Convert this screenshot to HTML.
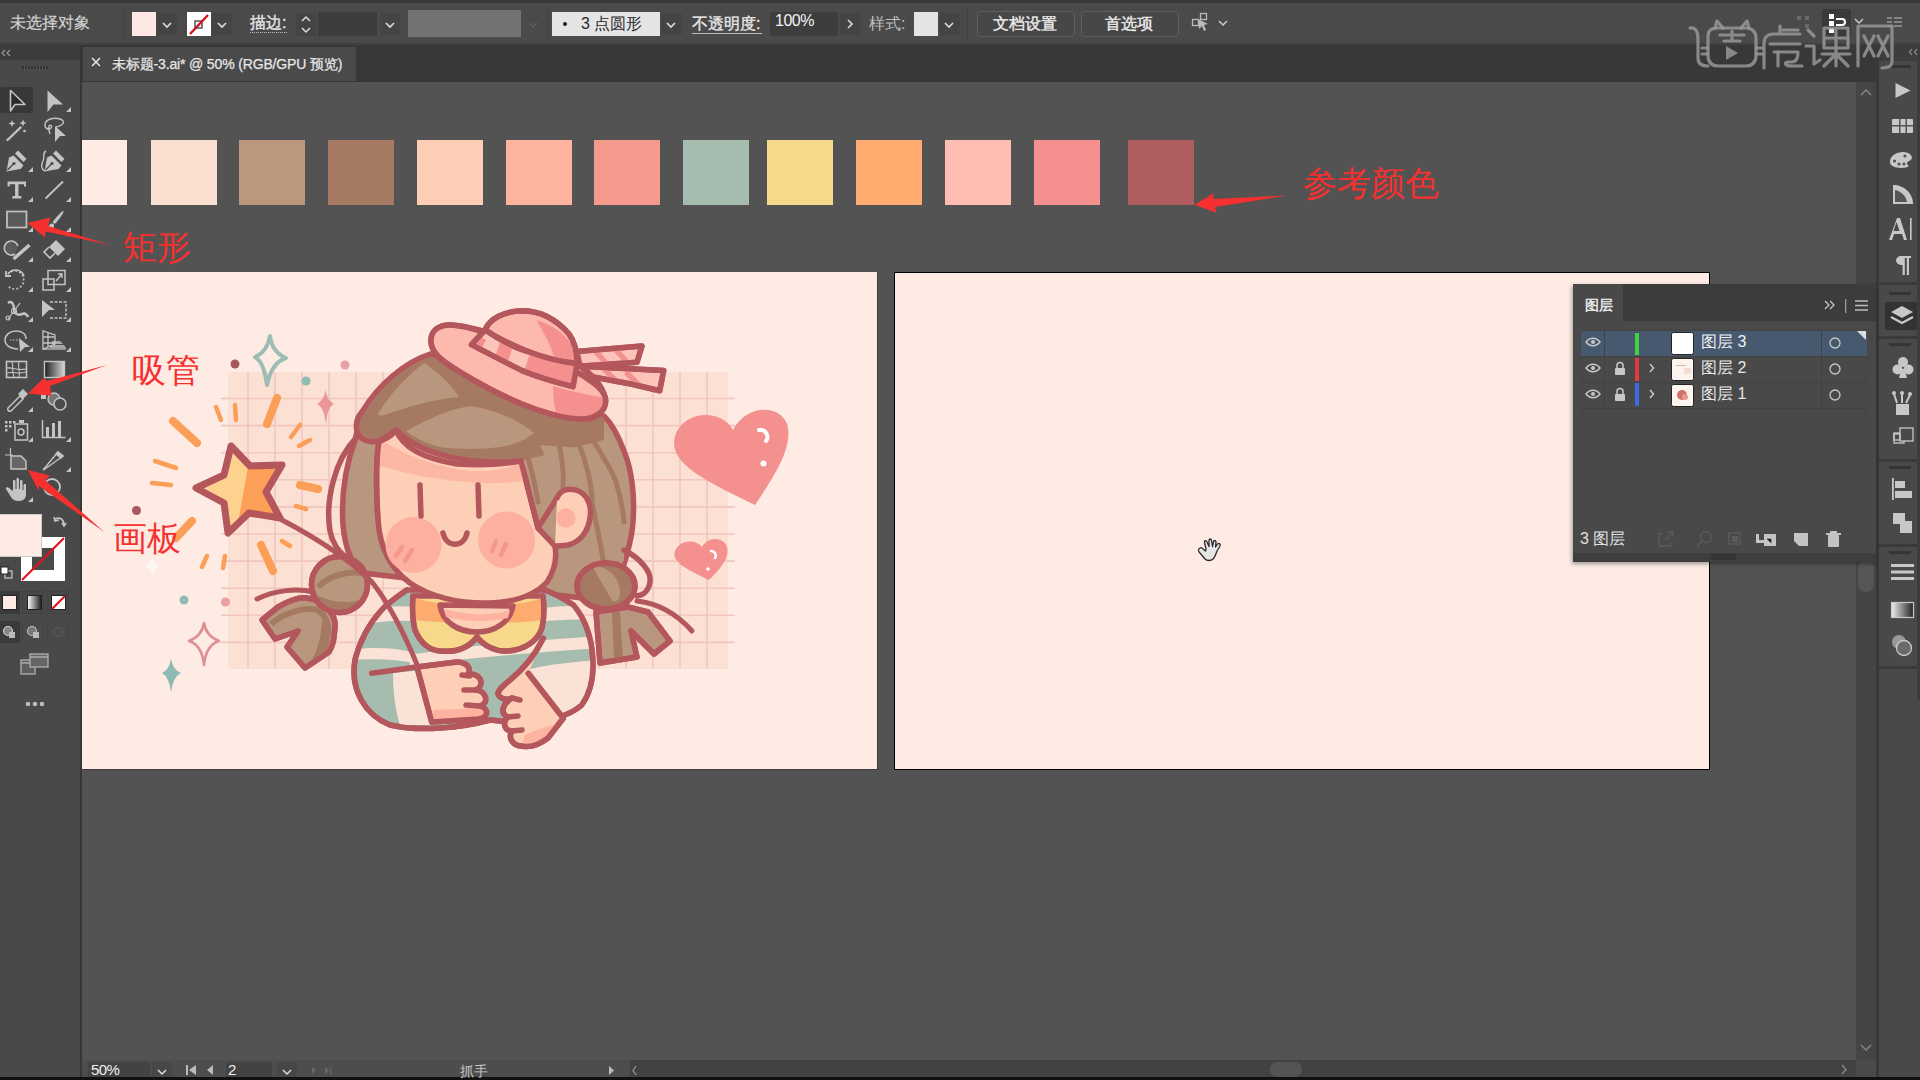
<!DOCTYPE html>
<html><head><meta charset="utf-8">
<style>
*{margin:0;padding:0;box-sizing:border-box}
html,body{width:1920px;height:1080px;overflow:hidden;background:#535353;font-family:"Liberation Sans",sans-serif;color:#ddd}
.a{position:absolute}
.t{position:absolute;white-space:nowrap;line-height:1}
</style></head><body>
<!-- top frame -->
<div class="a" style="left:0;top:0;width:1920px;height:3px;background:#393939"></div>
<!-- control bar -->
<div class="a" id="ctl" style="left:0;top:3px;width:1920px;height:42px;background:#4a4a4a"></div>
<!-- tab bar -->
<div class="a" style="left:0;top:45px;width:1920px;height:37px;background:#383838"></div>
<!-- canvas -->
<div class="a" style="left:82px;top:82px;width:1774px;height:978px;background:#535353"></div>
<!-- left toolbar -->
<div class="a" style="left:0;top:45px;width:80px;height:1032px;background:#494949"></div>
<div class="a" style="left:0;top:45px;width:80px;height:15px;background:#3c3c3c"></div>
<div class="a" style="left:80px;top:45px;width:2px;height:1032px;background:#363636"></div>
<!-- right scrollbar & dock -->
<div class="a" style="left:1856px;top:82px;width:20px;height:978px;background:#454545"></div>
<div class="a" style="left:1876px;top:45px;width:3px;height:1035px;background:#383838"></div>
<div class="a" style="left:1879px;top:45px;width:41px;height:1035px;background:#494949"></div>
<!-- status bar -->
<div class="a" style="left:82px;top:1060px;width:1774px;height:17px;background:#4a4a4a"></div>
<div class="a" style="left:0;top:1077px;width:1920px;height:3px;background:#111"></div>


<!-- CONTROL BAR CONTENT -->
<div class="a" style="left:0;top:43px;width:1920px;height:2px;background:#404040"></div>
<div class="t" style="left:10px;top:15px;font-size:16px;color:#d2d2d2;-webkit-text-stroke:0.2px #d2d2d2">未选择对象</div>
<div class="a" style="left:123px;top:8px;width:1px;height:32px;background:#424242"></div>
<div class="a" style="left:132px;top:12px;width:24px;height:24px;background:#fde9e3"></div>
<div class="a" style="left:157px;top:13px;width:20px;height:22px;background:#444;border-radius:2px"></div>
<svg class="a" style="left:157px;top:13px" width="20" height="22"><path d="M6 10l4 4 4-4" fill="none" stroke="#ddd" stroke-width="1.6"/></svg>
<div class="a" style="left:187px;top:12px;width:24px;height:24px;background:#fff"></div>
<svg class="a" style="left:187px;top:12px" width="24" height="24"><rect x="8" y="9" width="7" height="7" fill="none" stroke="#555" stroke-width="1.5"/><path d="M3 22L21 3" stroke="#d0121a" stroke-width="2.4"/></svg>
<div class="a" style="left:212px;top:13px;width:20px;height:22px;background:#444;border-radius:2px"></div>
<svg class="a" style="left:212px;top:13px" width="20" height="22"><path d="M6 10l4 4 4-4" fill="none" stroke="#ddd" stroke-width="1.6"/></svg>
<div class="t" style="-webkit-text-stroke:0.35px #e8e8e8;left:250px;top:15px;font-size:16px;color:#e0e0e0">描边:</div>
<div class="a" style="left:250px;top:32px;width:37px;height:0;border-top:1px dotted #bbb"></div>
<div class="a" style="left:296px;top:13px;width:20px;height:23px;background:#444;border-radius:2px"></div>
<svg class="a" style="left:296px;top:13px" width="20" height="23"><path d="M6 8l4-4 4 4M6 15l4 4 4-4" fill="none" stroke="#ddd" stroke-width="1.5"/></svg>
<div class="a" style="left:318px;top:12px;width:59px;height:24px;background:#3d3d3d"></div>
<div class="a" style="left:380px;top:13px;width:20px;height:22px;background:#444;border-radius:2px"></div>
<svg class="a" style="left:380px;top:13px" width="20" height="22"><path d="M6 10l4 4 4-4" fill="none" stroke="#ddd" stroke-width="1.6"/></svg>
<div class="a" style="left:408px;top:10px;width:113px;height:27px;background:#737373"></div>
<svg class="a" style="left:523px;top:13px" width="20" height="22"><path d="M6 10l4 4 4-4" fill="none" stroke="#5e5e5e" stroke-width="1.4"/></svg>
<div class="a" style="left:547px;top:8px;width:1px;height:32px;background:#424242"></div>
<div class="a" style="left:552px;top:12px;width:108px;height:24px;background:#e4e4e4"></div>
<div class="a" style="left:563px;top:22px;width:4px;height:4px;background:#222;border-radius:50%"></div>
<div class="t" style="left:581px;top:16px;font-size:16px;color:#2a2a2a">3 点圆形</div>
<div class="a" style="left:661px;top:13px;width:21px;height:22px;background:#444;border-radius:2px"></div>
<svg class="a" style="left:661px;top:13px" width="21" height="22"><path d="M6 10l4 4 4-4" fill="none" stroke="#ddd" stroke-width="1.6"/></svg>
<div class="t" style="-webkit-text-stroke:0.35px #e8e8e8;left:692px;top:16px;font-size:16px;color:#e6e6e6">不透明度:</div>
<div class="a" style="left:692px;top:33px;width:70px;height:1px;background:#bbb"></div>
<div class="a" style="left:770px;top:12px;width:68px;height:24px;background:#3d3d3d"></div>
<div class="t" style="left:775px;top:13px;font-size:16px;color:#f2f2f2;letter-spacing:-0.5px">100%</div>
<div class="a" style="left:840px;top:13px;width:20px;height:22px;background:#444;border-radius:2px"></div>
<svg class="a" style="left:840px;top:13px" width="20" height="22"><path d="M8 7l4 4-4 4" fill="none" stroke="#ddd" stroke-width="1.6"/></svg>
<div class="t" style="left:869px;top:16px;font-size:16px;color:#bdbdbd">样式:</div>
<div class="a" style="left:914px;top:12px;width:24px;height:24px;background:#e4e4e4"></div>
<div class="a" style="left:939px;top:13px;width:21px;height:22px;background:#444;border-radius:2px"></div>
<svg class="a" style="left:939px;top:13px" width="21" height="22"><path d="M6 10l4 4 4-4" fill="none" stroke="#ddd" stroke-width="1.6"/></svg>
<div class="a" style="left:967px;top:8px;width:1px;height:32px;background:#424242"></div>
<div class="a" style="left:977px;top:11px;width:98px;height:26px;border:1px solid #5e5e5e;border-radius:4px;background:#474747"></div>
<div class="t" style="-webkit-text-stroke:0.35px #e8e8e8;left:993px;top:16px;font-size:16px;color:#f0f0f0">文档设置</div>
<div class="a" style="left:1081px;top:11px;width:98px;height:26px;border:1px solid #5e5e5e;border-radius:4px;background:#474747"></div>
<div class="t" style="-webkit-text-stroke:0.35px #e8e8e8;left:1105px;top:16px;font-size:16px;color:#f0f0f0">首选项</div>
<svg class="a" style="left:1190px;top:10px" width="45" height="26"><rect x="2.5" y="9.5" width="6" height="6" fill="none" stroke="#bbb" stroke-width="1.3"/><rect x="10.5" y="3.5" width="6" height="6" fill="none" stroke="#bbb" stroke-width="1.3"/><path d="M8 9l10 5-4 1 2 5-2 1-2-5-3 3z" fill="#bbb"/><path d="M29 11l4 4 4-4" fill="none" stroke="#ccc" stroke-width="1.5"/></svg>
<!-- top right icons -->
<svg class="a" style="left:1795px;top:12px" width="20" height="24"><g fill="#6a6a6a"><rect x="2" y="4" width="4" height="4"/><rect x="10" y="4" width="4" height="4"/><rect x="10" y="12" width="4" height="4"/></g></svg>
<div class="a" style="left:1822px;top:9px;width:29px;height:29px;background:#3a3a3a;border-radius:2px"></div>
<svg class="a" style="left:1822px;top:9px" width="29" height="29"><g fill="#fff"><rect x="7" y="5" width="5" height="5"/><rect x="7" y="12" width="5" height="5"/><rect x="7" y="19" width="5" height="5"/></g><path d="M14 10h6a3 3 0 0 1 0 6h-6" fill="none" stroke="#fff" stroke-width="2"/></svg>
<svg class="a" style="left:1852px;top:14px" width="16" height="16"><path d="M3 5l4 4 4-4" fill="none" stroke="#ccc" stroke-width="1.4"/></svg>
<svg class="a" style="left:1886px;top:16px" width="18" height="14"><g stroke="#999" stroke-width="1.3"><path d="M1 2h5M1 6h5M1 10h5M8 2h8M8 6h8M8 10h8"/></g></svg>


<!-- TAB -->
<div class="a" style="left:83px;top:47px;width:273px;height:34px;background:#4a4a4a"></div>
<svg class="a" style="left:90px;top:56px" width="12" height="12"><path d="M2 2l8 8M10 2l-8 8" stroke="#e8e8e8" stroke-width="1.5"/></svg>
<div class="t" style="left:112px;top:57px;font-size:14px;color:#e6e6e6;letter-spacing:-0.15px;-webkit-text-stroke:0.25px #e6e6e6">未标题-3.ai* @ 50% (RGB/GPU 预览)</div>
<!-- toolbar header -->
<svg class="a" style="left:0;top:45px" width="80" height="30"><path d="M5 5l-3 3 3 3M10 5l-3 3 3 3" fill="none" stroke="#999" stroke-width="1.2"/><g fill="#333"><rect x="22" y="21" width="26" height="3"/></g><g fill="#555"><rect x="24" y="21" width="1" height="3"/><rect x="27" y="21" width="1" height="3"/><rect x="30" y="21" width="1" height="3"/><rect x="33" y="21" width="1" height="3"/><rect x="36" y="21" width="1" height="3"/><rect x="39" y="21" width="1" height="3"/><rect x="42" y="21" width="1" height="3"/><rect x="45" y="21" width="1" height="3"/></g></svg>
<!-- TOOLS -->
<svg class="a" style="left:0;top:0" width="80" height="720">
<defs><linearGradient id="gg" x1="0" x2="1"><stop offset="0" stop-color="#1e1e1e"/><stop offset="1" stop-color="#d8d8d8"/></linearGradient>
<linearGradient id="gg2" x1="0" x2="1"><stop offset="0" stop-color="#eee"/><stop offset="1" stop-color="#222"/></linearGradient></defs>
<rect x="0" y="87" width="33" height="26" rx="3" fill="#383838"/>
<g fill="#c4c4c4" stroke="none">
<!-- small triangles -->
<path d="M66 112h5v-5z"/>
<path d="M28 172h5v-5z"/><path d="M66 172h5v-5z"/>
<path d="M28 202h5v-5z"/><path d="M66 202h5v-5z"/>
<path d="M28 232h5v-5z"/><path d="M66 232h5v-5z"/>
<path d="M28 262h5v-5z"/><path d="M66 262h5v-5z"/>
<path d="M28 292h5v-5z"/><path d="M66 292h5v-5z"/>
<path d="M28 322h5v-5z"/><path d="M66 322h5v-5z"/>
<path d="M28 352h5v-5z"/><path d="M66 352h5v-5z"/>
<path d="M28 412h5v-5z"/>
<path d="M28 442h5v-5z"/><path d="M66 442h5v-5z"/>
<path d="M66 472h5v-5z"/>
<path d="M28 502h5v-5z"/>
<!-- direct selection -->
<path d="M47.5 90.5L63 104.5h-9.5l-6 7.5z"/>
<!-- magic wand stars -->
<path d="M12 120l1 2.5 2.5 1-2.5 1-1 2.5-1-2.5-2.5-1 2.5-1z"/>
<path d="M23 119.5l1 2.5 2.5 1-2.5 1-1 2.5-1-2.5-2.5-1 2.5-1z"/>
<circle cx="24.5" cy="131" r="1.3"/>
<!-- lasso arrow -->
<path d="M55 126l11 10h-6l-5 6z"/>
<!-- pen -->
<path d="M18 150.5l8.5 8.5-3 3-8.5-8.5z"/><path d="M13.5 155.5l10 10-3 3.5-14 2.5 2.5-14z"/><path d="M7.5 170l6-6" stroke="#494949" stroke-width="1.2"/><circle cx="14" cy="163.5" r="1.6" fill="#494949"/>
<!-- curvature pen -->
<path d="M56 150.5l8.5 8.5-3 3-8.5-8.5z"/><path d="M51.5 155.5l10 10-3 3.5-14 2.5 2.5-14z"/><path d="M45.5 170l6-6" stroke="#494949" stroke-width="1.2"/><circle cx="52" cy="163.5" r="1.6" fill="#494949"/>
<!-- Type T -->
<path d="M7.5 181.5h18.5v5h-2v-2.3h-5.5v11.8h2.8v2.5h-9v-2.5h2.8v-11.8h-5.5v2.3h-2z"/>
<!-- eraser -->
<path d="M56 240l9 9-7 7-9-9z"/>
<!-- direct free transform arrow -->
<path d="M42 300l13 10h-6l-7 7z"/>
<!-- perspective bars -->
<path d="M52 341h8l3 3h-11zM50 345h14l2 3h-16z" fill="#a8a8a8"/>
<!-- blend square -->
<rect x="41" y="393" width="5" height="6"/>
<!-- symbol sprayer dots -->
<rect x="5" y="421" width="2.5" height="2.5"/><rect x="9" y="421" width="2.5" height="2.5"/><rect x="13" y="421" width="2.5" height="2.5"/>
<rect x="5" y="425" width="2.5" height="2.5"/><rect x="9" y="425" width="2.5" height="2.5"/>
<rect x="5" y="429" width="2.5" height="2.5"/>
<rect x="19" y="420" width="5" height="3"/>
<!-- column graph bars -->
<rect x="46" y="427" width="3" height="10"/><rect x="52" y="423" width="3" height="14"/><rect x="58" y="421" width="3" height="16"/>
<!-- hand -->
<path d="M9 488c-1.5-1.5-3.5-1-3 1l5 8c2 3 4 4 8 4 5 0 7-3 7-7v-9c0-1.5-2.5-1.5-2.5 0v5h-1v-9c0-1.5-2.5-1.5-2.5 0v8h-1v-10c0-1.5-2.5-1.5-2.5 0v10h-1v-8c0-1.5-2.5-1.5-2.5 0v10z"/>
<!-- paintbrush --><path d="M63.5 211c1 1 -6 11 -9 13l-2-2c2-3 10-12 11-11z"/><path d="M50.5 224c2-1 4 0 3.5 2.5c-1 3-5 4.5-8.5 4c2-1 2.5-5 5-6.5z"/>
<!-- slice tip -->
<path d="M58 451l6 5-3 3-6-5z"/>
</g>
<g fill="none" stroke="#c4c4c4" stroke-width="1.6">
<!-- selection outline -->
<path d="M10.5 90.5V111l4.5-6.5h10z" fill="#2a2a2a" stroke-linejoin="round"/>
<!-- wand stick -->
<path d="M7.5 140l13-12.5" stroke-width="2.4" stroke-linecap="round"/>
<!-- lasso loop -->
<path d="M56 127c8-2 10-6 4-8c-6-2-15 0-15 6c0 4 4 5 6 3c2-2-1-4-2-2c-1 2 0 5 1 8" stroke-width="1.4"/>
<!-- curvature curl -->
<path d="M46 151c-4 2 -1 6 -3 10s-2 8 2 10" stroke-width="1.4"/>
<!-- line -->
<path d="M45.5 198.5L63 181.5" stroke-width="1.8"/>
<!-- rect -->
<rect x="7" y="211.5" width="19.5" height="16" fill="#5a5a5a" stroke="#bdbdbd" stroke-width="1.8"/>
<!-- shaper -->
<path d="M15 254a7 7 0 1 1 3-8" fill="#5a5a5a" stroke-width="1.6"/>
<path d="M13.5 259l16-14" stroke-width="3.5"/>
<!-- eraser bottom -->
<path d="M49 247l-5 5 6 6 5-5" stroke-width="1.6"/>
<!-- rotate -->
<path d="M8 274a9 9 0 1 1 0 12" stroke-dasharray="2 2"/>
<path d="M8 274a9 9 0 0 1 16 2" />
<path d="M6 271v5h5" stroke-width="1.8"/>
<!-- scale -->
<rect x="48" y="270.5" width="17" height="14" stroke-width="1.5"/>
<rect x="43" y="279" width="11" height="11" stroke-width="1.5"/>
<path d="M56 281l6-7M58 274h4v4" stroke-width="1.4"/>
<!-- puppet -->
<path d="M8 303c4-3 6 2 6 6c0 4 3 7 8 5c3-1 5 0 6 3" stroke-width="2.5"/>
<path d="M20 303l-12 16" stroke-width="1.2"/><circle cx="8" cy="318" r="2" stroke-width="1.2"/><circle cx="14" cy="311" r="2.5" stroke-width="1.2"/>
<!-- free transform dashed rect -->
<path d="M50 302h16v16h-16" stroke-width="1.4" stroke-dasharray="3 1.5"/>
<!-- shape builder -->
<path d="M18 349c-8 0-13-4-13-9s5-9 11-9c6 0 10 3 10 8" stroke-width="1.5"/>
<path d="M10 340h8" stroke-dasharray="1.5 1.5" stroke-width="1.2"/>
<path d="M19 338l11 9h-5l-5 5z" fill="#c4c4c4" stroke="none"/>
<!-- perspective grid -->
<path d="M43 331v18l12-5v-9z M43 337h12 M43 343h12 M48 332v15" stroke-width="1.3"/>
<path d="M43 349h23" stroke-width="1.3"/>
<!-- mesh -->
<rect x="6.5" y="361.5" width="20" height="16" stroke-width="1.6"/>
<path d="M7 368c6-1 8 3 19 1 M7 373c7-2 10 2 19-1 M12 362c2 5-1 9 2 15 M19 362c-2 6 2 8 0 15" stroke-width="1.1"/>
<!-- gradient -->
<rect x="44.5" y="361.5" width="20" height="16" fill="url(#gg)" stroke="#c4c4c4" stroke-width="1.4"/>
<!-- eyedropper -->
<path d="M8 408l12-12 3 3-12 12c-2 1-4-1-3-3z" stroke-width="1.5"/>
<path d="M18 394l5-5 5 5-5 5z" fill="#c4c4c4" stroke="none"/>
<!-- blend circles -->
<circle cx="54" cy="399" r="6" fill="#777" stroke-width="1.4"/>
<circle cx="60" cy="404" r="6" fill="#4a4a4a" stroke-width="1.5"/>
<!-- symbol sprayer bottle -->
<rect x="15" y="424" width="12.5" height="16" stroke-width="1.5"/><circle cx="21" cy="432" r="3" stroke-width="1.5"/>
<!-- column graph axis -->
<path d="M42.5 420v17.5h23" stroke-width="1.5"/>
<!-- artboard -->
<path d="M10.5 448v8M5 455h8" stroke-width="1.2"/>
<path d="M11 456h10l5 5v8h-15z" fill="#666" stroke-width="1.5"/>
<!-- slice -->
<path d="M43 470l15-18l5 4l-18 13z" stroke-width="1.4"/>
<!-- zoom -->
<circle cx="52" cy="487" r="8" stroke-width="1.8"/>
</g>
</svg>
<!-- FILL/STROKE WIDGET -->
<div class="a" style="left:21px;top:537px;width:44px;height:44px;background:#fff"></div>
<div class="a" style="left:32px;top:548px;width:22px;height:22px;background:#4a4a4a"></div>
<svg class="a" style="left:21px;top:537px" width="44" height="44"><path d="M1 43L43 1" stroke="#e0121a" stroke-width="2.2"/></svg>
<div class="a" style="left:0;top:514px;width:42px;height:43px;background:#fdebe4;border:1px solid #ccc;border-left:none"></div>
<svg class="a" style="left:52px;top:514px" width="16" height="16"><path d="M3 5c4-2 8-1 9 5" fill="none" stroke="#c4c4c4" stroke-width="1.8"/><path d="M2 3l1 4 4-1M10 9l2 3 2-3" fill="none" stroke="#c4c4c4" stroke-width="1.6"/></svg>
<svg class="a" style="left:0;top:566px" width="14" height="14"><rect x="5" y="5" width="7" height="7" fill="none" stroke="#ccc" stroke-width="1.2"/><rect x="1" y="1" width="7" height="7" fill="#fff" stroke="#222" stroke-width="1"/></svg>
<div class="a" style="left:0;top:591px;width:20px;height:23px;background:#3a3a3a"></div>
<div class="a" style="left:22px;top:591px;width:22px;height:23px;background:#474747;border:1px solid #424242"></div>
<div class="a" style="left:47px;top:591px;width:22px;height:23px;background:#474747;border:1px solid #424242"></div>
<div class="a" style="left:2px;top:595px;width:15px;height:15px;background:#fdebe4;border:1px solid #222"></div>
<div class="a" style="left:27px;top:595px;width:15px;height:15px;background:linear-gradient(90deg,#f5f5f5,#222);border:1px solid #222"></div>
<div class="a" style="left:51px;top:595px;width:15px;height:15px;background:#fff;border:1px solid #222"></div>
<svg class="a" style="left:51px;top:595px" width="15" height="15"><path d="M1 14L14 1" stroke="#e0121a" stroke-width="2.2"/></svg>
<div class="a" style="left:0;top:621px;width:20px;height:22px;background:#3a3a3a"></div>
<div class="a" style="left:22px;top:621px;width:22px;height:22px;border:1px solid #444"></div>
<div class="a" style="left:47px;top:621px;width:22px;height:22px;border:1px solid #444"></div>
<svg class="a" style="left:0;top:621px" width="70" height="22"><circle cx="8" cy="10" r="4.5" fill="#888" stroke="#ccc" stroke-width="1.2"/><rect x="9" y="11" width="6" height="6" fill="#bbb"/><circle cx="32" cy="10" r="4.5" fill="#777" stroke="#bbb" stroke-width="1.2"/><rect x="33" y="11" width="6" height="6" fill="#bbb"/><circle cx="58" cy="11" r="4.5" fill="none" stroke="#5e5e5e" stroke-width="1.2"/></svg>
<svg class="a" style="left:18px;top:651px" width="34" height="26"><rect x="3" y="9" width="14" height="14" fill="#5e5e5e" stroke="#aaa" stroke-width="1.4"/><rect x="12" y="3" width="18" height="13" fill="#666" stroke="#aaa" stroke-width="1.4"/><path d="M12 6h18M3 12h9" stroke="#aaa" stroke-width="1.4"/></svg>
<svg class="a" style="left:24px;top:699px" width="24" height="10"><circle cx="4" cy="5" r="2.3" fill="#bbb"/><circle cx="11" cy="5" r="2.3" fill="#bbb"/><circle cx="18" cy="5" r="2.3" fill="#bbb"/></svg>


<!-- SWATCHES -->
<div class="a" style="left:82px;top:140px;width:45px;height:65px;background:#fdebe4"></div>
<div class="a" style="left:151px;top:140px;width:66px;height:65px;background:#f9dfd0"></div>
<div class="a" style="left:239px;top:140px;width:66px;height:65px;background:#bb977e"></div>
<div class="a" style="left:328px;top:140px;width:66px;height:65px;background:#a67a62"></div>
<div class="a" style="left:417px;top:140px;width:66px;height:65px;background:#fecdb6"></div>
<div class="a" style="left:506px;top:140px;width:66px;height:65px;background:#feb39e"></div>
<div class="a" style="left:594px;top:140px;width:66px;height:65px;background:#f39a8c"></div>
<div class="a" style="left:683px;top:140px;width:66px;height:65px;background:#a5bcae"></div>
<div class="a" style="left:767px;top:140px;width:66px;height:65px;background:#f8d98c"></div>
<div class="a" style="left:856px;top:140px;width:66px;height:65px;background:#fdab6f"></div>
<div class="a" style="left:945px;top:140px;width:66px;height:65px;background:#febdb3"></div>
<div class="a" style="left:1034px;top:140px;width:66px;height:65px;background:#f4918f"></div>
<div class="a" style="left:1128px;top:140px;width:66px;height:65px;background:#b05d60"></div>

<!-- artboards -->
<div class="a" style="left:82px;top:272px;width:795px;height:497px;background:#fdebe4;box-shadow:1px 1px 0 #3d3d3d"></div>
<div class="a" style="left:894px;top:272px;width:816px;height:498px;background:#fdebe4;border:1px solid #000"></div>



<!-- ILLUS --><svg class="a" style="left:82px;top:272px" width="795" height="497" viewBox="82 272 795 497">
<defs>
<clipPath id="ab1"><rect x="82" y="272" width="795" height="497"/></clipPath>
<clipPath id="bodyc"><path d="M406.7 590C395 598 388 603 381.7 610C368 625 360 640 355 660C350 690 365 715 390 725C420 732 460 728 490 720C530 725 565 720 581.7 705C600 680 595 630 573.3 605C563 598 555 594 545 590Z"/></clipPath>
</defs>
<g clip-path="url(#ab1)">
<!-- grid -->
<rect x="228" y="372" width="500" height="297" fill="#fbe0d3"/>
<g stroke="#f1c6c0" stroke-width="1.6">
<path d="M221 398.5H735M221 425.6H735M221 452.7H735M221 479.8H735M221 506.9H735M221 534H735M221 561.1H735M221 588.2H735M221 615.3H735M221 642.4H735"/>
<path d="M248 372V669M275 372V669M302 372V669M329 372V669M356 372V669M383 372V669M410 372V669M437 372V669M464 372V669M491 372V669M518 372V669M545 372V669M572 372V669M599 372V669M626 372V669M653 372V669M680 372V669M707 372V669"/>
</g>
<!-- dots -->
<circle cx="235" cy="364" r="4.5" fill="#a9585d"/>
<circle cx="345" cy="365" r="4.5" fill="#eb9fa2"/>
<circle cx="306" cy="381" r="4.5" fill="#8fbdb4"/>
<circle cx="136.5" cy="510.5" r="4.5" fill="#a9585d"/>
<circle cx="184" cy="600" r="4.5" fill="#8fbdb4"/>
<circle cx="225.5" cy="602" r="4.5" fill="#eb9fa2"/>
<!-- sparkles -->
<path d="M270 336Q272 352 286 358Q272 362 267 385Q264 362 255 357Q267 352 270 336Z" fill="none" stroke="#9dbdb4" stroke-width="4" stroke-linejoin="round"/>
<path d="M325.5 390Q327 400 334 404Q327 407 326 425Q324 407 317 404Q324 400 325.5 390Z" fill="#e9979a"/>
<path d="M204 623Q206 636 219 641Q206 645 204 665Q202 645 189 641Q202 636 204 623Z" fill="none" stroke="#df8f93" stroke-width="2.6" stroke-linejoin="round"/>
<path d="M171 659Q173 670 181 673Q173 677 171 692Q169 677 162 673Q169 670 171 659Z" fill="#8fbab3"/>
<path d="M152.6 557Q154 564 160 566Q154 568 152.6 575Q151 568 145 566Q151 564 152.6 557Z" fill="#fdf8f4"/>
<!-- rays -->
<g stroke="#fb9e57" stroke-linecap="round" fill="none">
<path d="M173 421L197 443" stroke-width="8"/>
<path d="M277 398L267 424" stroke-width="8"/>
<path d="M300 485L318 489" stroke-width="8"/>
<path d="M192 521L176 538" stroke-width="8"/>
<path d="M261 545L273 571" stroke-width="8"/>
<path d="M216 407L221 420M235 405L236 420M300 425L291 437M310 440L299 446M155 461L176 468M152 483L171 485M296 506L306 509M282 541L290 546M207 556L202 567M225 556L223 568" stroke-width="4.5"/>
</g>
<!-- hearts -->
<path d="M733 430C722 408 683 410 675 436C668 462 700 478 755 505C773 478 794 447 787 424C780 404 746 404 733 430Z" fill="#f4918f"/>
<path d="M759 430a7 7 0 0 1 7 11" fill="none" stroke="#fff" stroke-width="4" stroke-linecap="round"/>
<circle cx="763.5" cy="463.5" r="3" fill="#fff"/>
<path d="M702 547C696 539 680 539 675 551C671 562 688 570 709 580C720 569 730 558 727 547C724 537 708 536 702 547Z" fill="#f4918f"/>
<path d="M711 551a4.5 4.5 0 0 1 4 7" fill="none" stroke="#fff" stroke-width="2.5" stroke-linecap="round"/>
<circle cx="708" cy="569" r="1.8" fill="#fff"/>

<g stroke="#b3575d" stroke-width="5.5" stroke-linejoin="round" stroke-linecap="round">
<!-- hair back -->
<path d="M431 354C405 362 378 385 362 412L355 440C346 465 341 495 343 525C345 548 352 564 362 573L600 600C615 590 625 570 632 532C636 500 632 470 624 451C618 435 610 422 604 416Z" fill="#b9977e"/>
<path d="M355.6 438.5C335 460 325 500 330 531C333 545 340 553 346 557" fill="none"/>
</g>
<!-- hair top dark region -->
<path d="M431 357C405 365 380 388 364 414L360 430L396 430C410 450 470 466 521 461L604 440L604 418C560 400 480 370 431 357Z" fill="#a67a62"/>
<path d="M376 418C385 400 402 380 424 363C440 373 452 386 459 397C440 398 412 405 376 418Z" fill="#b9977e"/>
<path d="M357 422C355 436 365 443 379 442C388 441 394 436 397 430L390 416L362 414Z" fill="#a67a62"/>
<path d="M406 431C430 418 450 409 470 406C500 411 520 421 534 433C522 442 510 446 500 447C480 450 452 449 440 447C425 443 413 437 406 431Z" fill="#b9977e"/>
<!-- right hair strands -->
<path d="M540 445C552 470 560 500 562 515L580 520C590 540 600 570 608 590L624 560C626 530 622 480 610 450Z" fill="#b9977e"/>
<g stroke="#a67a62" stroke-width="5" fill="none" stroke-linecap="round">
<path d="M557 437C562 455 564 475 563 488"/>
<path d="M577 439C586 460 592 485 592 502C596 525 603 550 606 583"/>
<path d="M591 437C602 455 612 470 616 482C620 495 623 510 624 522"/>
<path d="M526 451C532 470 536 490 538 502"/>
</g>
<g stroke="#b3575d" stroke-width="5.5" stroke-linejoin="round" stroke-linecap="round">
<!-- left braid tail -->
<path d="M262 620L278 607C290 600 300 597 307 598C318 600 325 603 327 607C333 615 336 620 335 627C334 640 333 646 329 652L305 668L287 647L298 631L275 639Z" fill="#b9977e"/>
</g>
<path d="M271 624C285 612 305 607 318 610C326 616 329 625 328 635" fill="none" stroke="#a67a62" stroke-width="6"/>
<path d="M322 615C330 625 333 640 326 652L312 660C320 645 322 630 322 615Z" fill="#a67a62"/>
<g stroke="#b3575d" stroke-width="5.5" stroke-linejoin="round" stroke-linecap="round" fill="none">
<path d="M262 620L278 607C290 600 300 597 307 598C318 600 325 603 327 607C333 615 336 620 335 627C334 640 333 646 329 652L305 668L287 647L298 631L275 639Z"/>
</g>
<g stroke="#b3575d" stroke-width="5.5" stroke-linejoin="round" stroke-linecap="round">
<circle cx="339.5" cy="584.5" r="28" fill="#b9977e"/>
</g>
<path d="M318 587C330 575 350 570 365 574" fill="none" stroke="#a67a62" stroke-width="6"/>
<path d="M316 595C330 602 350 605 366 598C362 606 350 612 338 612C328 611 320 604 316 595Z" fill="#a67a62"/>
<g stroke="#b3575d" stroke-width="5.5" stroke-linejoin="round" stroke-linecap="round" fill="none">
<circle cx="339.5" cy="584.5" r="28"/>
</g>
<g stroke="#b3575d" stroke-width="5.5" stroke-linejoin="round" stroke-linecap="round">
<!-- right braid tail -->
<path d="M596 612L600 663L637 657L631 631L654 654L670 641L648 612L628 607Z" fill="#b9977e"/>
</g>
<path d="M612 612L620 612L623 660L614 661Z" fill="#a67a62"/>
<g stroke="#b3575d" stroke-width="5.5" stroke-linejoin="round" stroke-linecap="round" fill="none">
<path d="M596 612L600 663L637 657L631 631L654 654L670 641L648 612L628 607Z"/>
<path d="M624 550C640 558 652 572 650 582C649 590 644 595 637 596"/>
</g>
<g stroke="#b3575d" stroke-width="5.5" stroke-linejoin="round" stroke-linecap="round">
<ellipse cx="606" cy="586" rx="29" ry="23" fill="#a67a62"/>
</g>
<path d="M592 566C605 565 618 575 620 590C621 600 615 604 612 600C606 590 600 580 592 566Z" fill="#b9977e"/>
<g stroke="#b3575d" stroke-width="5.5" stroke-linejoin="round" stroke-linecap="round" fill="none">
<ellipse cx="606" cy="586" rx="29" ry="23"/>
</g>
<g stroke="#b3575d" stroke-width="5.5" stroke-linejoin="round" stroke-linecap="round">
<!-- body -->
<path d="M406.7 590C395 598 388 603 381.7 610C368 625 360 640 355 660C350 690 365 715 390 725C420 732 460 728 490 720C530 725 565 720 581.7 705C600 680 595 630 573.3 605C563 598 555 594 545 590Z" fill="#a5bcae"/>
</g>
<g clip-path="url(#bodyc)" fill="#fae3d6">
<path d="M370 609C395 605 415 606 430 609L430 623C410 620 390 620 368 624Z"/>
<path d="M535 609C555 606 575 605 595 606L595 620C575 619 555 620 535 622Z"/>
<path d="M350 650C380 645 410 650 420 655L420 664C400 660 380 658 350 660Z"/>
<path d="M410 655C470 645 540 640 600 636L600 648C540 652 470 658 410 665Z"/>
<path d="M393 673L423 670L430 725L400 725C395 710 393 690 393 673Z"/>
<path d="M527 670C545 665 570 662 600 660L600 715L563 720Z"/>
</g>
<g stroke="#b3575d" stroke-width="5.5" stroke-linejoin="round" stroke-linecap="round">
<path d="M406.7 590C395 598 388 603 381.7 610C368 625 360 640 355 660C350 690 365 715 390 725C420 732 460 728 490 720C530 725 565 720 581.7 705C600 680 595 630 573.3 605C563 598 555 594 545 590" fill="none"/>
<!-- collar -->
<path d="M413 596C412 610 413 622 415 630C420 642 428 650 440 651C458 653 470 646 477 637C484 646 495 651 505 651C525 651 538 640 542 628C545 615 544 605 543 596Z" fill="#f8d98c"/>
</g>
<path d="M416 598C440 608 520 608 541 598L542 620C520 624 440 624 416 620Z" fill="#fdab6f"/>
<g stroke="#b3575d" stroke-width="5.5" stroke-linejoin="round" stroke-linecap="round">
<path d="M413 596C412 610 413 622 415 630C420 642 428 650 440 651C458 653 470 646 477 637C484 646 495 651 505 651C525 651 538 640 542 628C545 615 544 605 543 596" fill="none"/>
<path d="M440 605C442 622 458 632 477 632C495 632 510 622 513 606Z" fill="#fecfb7"/>
</g>
<path d="M444 609C470 616 490 616 510 610L508 618C490 622 466 622 446 617Z" fill="#fdb3a0"/>
<g stroke="#b3575d" stroke-width="5.5" stroke-linejoin="round" stroke-linecap="round">
<!-- face -->
<path d="M379 441C376 460 376 490 378 520C380 550 392 570 410 583C430 597 460 604 490 603C515 602 535 595 547 582C555 570 557 558 555 546L538 528L521 461C470 466 420 455 396 430Z" fill="#fecfb7"/>
</g>
<!-- face shading under bangs -->
<path d="M379 438C400 454 440 468 470 471C495 472 515 467 524 460L528 480C500 486 440 484 380 466Z" fill="#fcb8a3"/>
<!-- cheeks -->
<circle cx="413.5" cy="545" r="28" fill="#fdb0a0"/>
<circle cx="506.7" cy="540" r="28.5" fill="#fdb0a0"/>
<g stroke="#f5978c" stroke-width="4.5" stroke-linecap="round">
<path d="M402 547L396 556M412 550L405 561M496 541L492 551M506 544L501 555"/>
</g>
<g stroke="#b3575d" stroke-width="5.5" stroke-linejoin="round" stroke-linecap="round" fill="none">
<path d="M420 485L421 516M478 485L479 516"/>
<path d="M443 533C446 548 464 548 467 533"/>
<!-- bangs outline + bun -->
<path d="M362 412C356 418 354 430 360 437C368 444 385 444 396 430C402 446 420 458 457 464C490 466 510 463 521 461L538 528L557 498"/>

<path d="M379 441C376 460 376 490 378 520"/>
</g>
<g stroke="#b3575d" stroke-width="5.5" stroke-linejoin="round" stroke-linecap="round">
<!-- ear -->
<path d="M557 498C560 490 568 488 576 490C588 494 592 506 590 518C588 532 580 542 568 545C562 546 557 546 555 546" fill="#fecfb7"/>
</g>
<circle cx="566" cy="518" r="9.7" fill="#fdb0a0"/>
<!-- hat brim -->
<g stroke="#b3575d" stroke-width="5.5" stroke-linejoin="round" stroke-linecap="round">
<path d="M431 342C430 330 440 324 452 325C480 327 530 345 570 368C595 382 607 392 605.5 402C604 414 595 420 580 419C555 418 520 405 488 388C462 374 442 362 436 354C433 350 431 346 431 342Z" fill="#fdb9ae"/>
</g>
<path d="M553 386C565 390 590 395 605 398C606 410 598 418 582 419C570 419 560 416 556 413C554 405 553 395 553 386Z" fill="#f4918f"/>
<g stroke="#b3575d" stroke-width="5.5" stroke-linejoin="round" stroke-linecap="round">
<path d="M577 351.5L642 346L637 362.3L580 366.3Z" fill="#fcc4bb"/>
<path d="M580 366.3L663.7 370.4L659.7 390.7L631 384L593 377Z" fill="#fcc4bb"/>
</g>
<g stroke="#f4918f" stroke-width="5.5" fill="none">
<path d="M596 352L608 365M616 350L628 363M604 369L618 383M626 372L640 386"/>
</g>
<g stroke="#b3575d" stroke-width="5.5" stroke-linejoin="round" stroke-linecap="round">
<path d="M485 329.8C490 318 505 311 523 310.8C540 311 555 318 569 334C575 342 577 352 577 363.6C560 362 540 358 528 351.5C510 344 495 337 485 329.8Z" fill="#fdb9ae"/>
</g>
<path d="M536.5 320.3C555 325 570 338 575 352L576 363C568 363 560 363 555.4 363.6C553 350 548 340 536.5 320.3Z" fill="#f4918f"/>
<g stroke="#b3575d" stroke-width="5.5" stroke-linejoin="round" stroke-linecap="round">
<path d="M485 329.8C500 340 515 348 528 351.5C545 358 560 362 577 363.6L573 386.7C555 382 535 376 521.6 370.4C505 362 485 352 471.5 344.7Z" fill="#fcc4bb"/>
</g>
<path d="M500 342L512 349L507 364L495 357Z" fill="#f4918f"/>
<path d="M530 353C545 359 560 362 575 364L572 384C555 380 540 375 525 369Z" fill="#f4918f"/>
<path d="M478 335L486 340L481 349L474 345Z" fill="#f4918f"/>
<g stroke="#b3575d" stroke-width="5.5" stroke-linejoin="round" stroke-linecap="round" fill="none">
<path d="M485 329.8C500 340 515 348 528 351.5C545 358 560 362 577 363.6L573 386.7C555 382 535 376 521.6 370.4C505 362 485 352 471.5 344.7Z"/>
<path d="M485 329.8C490 318 505 311 523 310.8C540 311 555 318 569 334C575 342 577 352 577 363.6"/>
<path d="M577 351.5L642 346L637 362.3L580 366.3"/>
<path d="M580 366.3L663.7 370.4L659.7 390.7L631 384L593 377"/>
<path d="M431 342C430 330 440 324 452 325C466 326 471 328 480 331M577 364C590 372 603 385 605.5 399C607 410 597 419 580 419C555 418 520 405 488 388C462 374 442 362 436 354C433 350 431 346 431 342"/>
</g>
<!-- star -->
<path d="M231 446L250 466L282 465L266 492L280 518L249 513L228 533L224 503L196 488L224 475Z" fill="#fd9f57"/>
<path d="M231 446L248 467L238 523L228 533L224 503L196 488L224 475Z" fill="#fdd28f"/>
<g stroke="#b3575d" stroke-width="7" stroke-linejoin="round" fill="none">
<path d="M231 446L250 466L282 465L266 492L280 518L249 513L228 533L224 503L196 488L224 475Z"/>
</g>
<g stroke="#b3575d" stroke-width="5" stroke-linecap="round" fill="none">
<!-- wand -->
<path d="M282 520C320 540 350 560 372 582C390 605 405 635 418 667"/>
<path d="M257 599C275 590 298 588 313 592"/>
<path d="M637 601C655 603 675 612 692 631"/>
</g>
<g stroke="#b3575d" stroke-width="5.5" stroke-linejoin="round" stroke-linecap="round">
<!-- left hand -->
<path d="M417 667L456.7 662C466 662 472 668 468 674C480 673 486 684 476 690C486 691 490 703 480 706C490 709 488 718 478 719L431.7 722Z" fill="#fecfb7"/>
</g>
<path d="M433 710L482 708C488 712 486 718 478 719L432 722Z" fill="#fdb3a0"/>
<g stroke="#b3575d" stroke-width="5.5" stroke-linejoin="round" stroke-linecap="round" fill="none">
<path d="M417 667L456.7 662C466 662 472 668 468 674C480 673 486 684 476 690C486 691 490 703 480 706C490 709 488 718 478 719L431.7 722Z"/>
<path d="M371.7 673.3L417 667"/>
<path d="M462 675L470 676M464 690L475 690M466 705L479 706"/>
</g>
<g stroke="#b3575d" stroke-width="5.5" stroke-linejoin="round" stroke-linecap="round">
<!-- right hand -->
<path d="M543.3 638.3C535 655 525 668 510 680C503 686 498 690 498 694C500 700 508 700 512 698C502 704 500 714 508 717C502 722 504 731 512 731C508 737 512 746 522 746C530 748 540 744 548 738L563.3 718.3L528.3 673.3" fill="#fecfb7"/>
</g>
<path d="M525 735C535 730 552 725 558 724L548 740C538 746 528 747 522 745Z" fill="#fdb3a0"/>
<g stroke="#b3575d" stroke-width="5.5" stroke-linejoin="round" stroke-linecap="round" fill="none">
<path d="M543.3 638.3C535 655 525 668 510 680C503 686 498 690 498 694C500 700 508 700 512 698C502 704 500 714 508 717C502 722 504 731 512 731C508 737 512 746 522 746C530 748 540 744 548 738L563.3 718.3"/>
<path d="M528.3 673.3L563.3 718.3"/>
<path d="M512 698L520 700M508 717L518 716M512 731L522 730"/>
</g>
</g>
</svg>
<!-- /ILLUS -->
<!-- SCROLLBAR DETAILS -->
<svg class="a" style="left:1856px;top:84px" width="20" height="16"><path d="M5 11l5-5 5 5" fill="none" stroke="#8a8a8a" stroke-width="1.3"/></svg>
<div class="a" style="left:1858px;top:560px;width:16px;height:32px;background:#565656;border-radius:8px"></div>
<svg class="a" style="left:1856px;top:1040px" width="20" height="16"><path d="M5 5l5 5 5-5" fill="none" stroke="#8a8a8a" stroke-width="1.3"/></svg>
<!-- status bar detail -->
<div class="a" style="left:82px;top:1060px;width:548px;height:17px;background:#4d4d4d"></div>
<div class="a" style="left:630px;top:1060px;width:1226px;height:17px;background:#424242"></div>
<div class="a" style="left:1270px;top:1062px;width:32px;height:15px;background:#545454;border-radius:7px"></div>
<svg class="a" style="left:1836px;top:1062px" width="16" height="15"><path d="M6 3l4 4.5-4 4.5" fill="none" stroke="#8a8a8a" stroke-width="1.3"/></svg>
<div class="a" style="left:1856px;top:1060px;width:20px;height:17px;background:#4a4a4a"></div>
<div class="a" style="left:88px;top:1062px;width:62px;height:15px;background:#434343"></div>
<div class="t" style="left:91px;top:1062px;font-size:15px;color:#f0f0f0;letter-spacing:-0.6px">50%</div>
<div class="a" style="left:152px;top:1062px;width:20px;height:15px;background:#474747"></div>
<svg class="a" style="left:152px;top:1062px" width="20" height="15"><path d="M6 8l4 4 4-4" fill="none" stroke="#ddd" stroke-width="1.5"/></svg>
<svg class="a" style="left:176px;top:1062px" width="160" height="15"><path d="M10 3h2v10h-2zM20 3v10l-7-5z" fill="#bbb"/><path d="M37 3v10l-6-5z" fill="#bbb"/><path d="M136 5v7l4-3.5z" fill="#666"/><path d="M149 5v7l4-3.5z M154 5h1.3v7h-1.3z" fill="#666"/></svg>
<div class="a" style="left:226px;top:1062px;width:46px;height:15px;background:#434343"></div>
<div class="t" style="left:228px;top:1062px;font-size:15px;color:#f0f0f0">2</div>
<div class="a" style="left:277px;top:1062px;width:20px;height:15px;background:#474747"></div>
<svg class="a" style="left:277px;top:1062px" width="20" height="15"><path d="M6 8l4 4 4-4" fill="none" stroke="#ddd" stroke-width="1.5"/></svg>
<div class="t" style="left:460px;top:1064px;font-size:14px;color:#c8c8c8">抓手</div>
<svg class="a" style="left:600px;top:1062px" width="40" height="15"><path d="M9 4v9l5-4.5z" fill="#bbb"/><path d="M36 4l-3 4.5 3 4.5" fill="none" stroke="#999" stroke-width="1.2"/></svg>
<!-- RIGHT DOCK -->
<svg class="a" style="left:1879px;top:0" width="41" height="700">
<rect x="0" y="45" width="41" height="16" fill="#3d3d3d"/><rect x="38" y="45" width="3" height="655" fill="#3c3c3c"/>
<path d="M33 49l-2.5 3 2.5 3M38 49l-2.5 3 2.5 3" fill="none" stroke="#999" stroke-width="1.1"/>
<g fill="#3a3a3a"><rect x="0" y="282" width="38" height="3"/><rect x="0" y="336" width="38" height="3"/><rect x="0" y="459" width="38" height="3"/><rect x="0" y="544" width="38" height="3"/><rect x="0" y="666" width="38" height="3"/></g>
<g fill="#353535"><rect x="10" y="65" width="22" height="3"/><rect x="10" y="292" width="22" height="3"/><rect x="10" y="343" width="22" height="3"/><rect x="10" y="466" width="22" height="3"/><rect x="10" y="551" width="22" height="3"/></g>
<rect x="6" y="302" width="32" height="28" rx="2" fill="#333"/>
<g fill="#c8c8c8">
<path d="M16.5 83v15l15-7.5z"/>
<rect x="13" y="119" width="21" height="14" rx="1"/>
<path d="M11 162c0-8 11-12 18-9 5 2 5 7 1 8-3 1-2 4 0 5-3 3-19 3-19-4z"/>
<path d="M14 185v19h20c0-11-9-19-20-19z"/>
<path d="M18 218h3l7 22h-3l-2-6h-8l-2 6h-3zM14.5 231h6l-3-9z"/><rect x="31" y="218" width="1.6" height="22"/>
<path d="M21 256h11v2h-2v17h-2.2v-17h-2v17h-2.2v-10c-4 0-6.5-2-6.5-4.5s2.5-4.5 4.5-4.5z"/>
<path d="M23 306l11 6-11 6-11-6z"/><path d="M12 317l11 6 11-6" fill="none" stroke="#c8c8c8" stroke-width="2.4"/>
<circle cx="24" cy="362" r="5"/><circle cx="18.5" cy="369.5" r="5"/><circle cx="29.5" cy="369.5" r="5"/><path d="M22.5 369h3l2.5 9h-8z"/>
<rect x="17" y="404" width="13" height="11"/>
<rect x="13" y="478" width="1.8" height="22"/><rect x="16" y="481" width="10" height="7"/><rect x="16" y="491" width="17" height="7"/>
<rect x="14" y="513" width="12" height="11"/><rect x="21" y="521" width="12" height="12"/>
<rect x="12" y="564" width="23" height="3"/><rect x="12" y="570.5" width="23" height="3"/><rect x="12" y="577" width="23" height="3"/>
</g>
<path d="M18 403l-3-9M23 403l0-9M27 403l4-8" stroke="#c8c8c8" stroke-width="2"/>
<circle cx="15" cy="393" r="2" fill="#c8c8c8"/><circle cx="23" cy="393" r="2" fill="#c8c8c8"/><circle cx="31" cy="394" r="2" fill="#c8c8c8"/>
<rect x="13" y="125" width="21" height="1.5" fill="#555"/><rect x="20" y="119" width="1.5" height="14" fill="#555"/><rect x="26.5" y="119" width="1.5" height="14" fill="#555"/>
<circle cx="15.5" cy="161" r="1.6" fill="#555"/><circle cx="20" cy="164" r="1.6" fill="#555"/><circle cx="25" cy="164" r="1.6" fill="#555"/><circle cx="26" cy="156" r="1.6" fill="#555"/>
<path d="M16 190v12h12c-1-6-6-11-12-12z" fill="#555"/>
<rect x="15" y="433" width="10" height="10" fill="none" stroke="#c8c8c8" stroke-width="1.3"/><rect x="21" y="428" width="13" height="13" fill="#494949" stroke="#c8c8c8" stroke-width="1.3"/><rect x="15" y="434" width="6" height="6" fill="none" stroke="#c8c8c8" stroke-width="1.3"/>
<rect x="12.5" y="602.5" width="22" height="15" fill="url(#gg2)" stroke="#c8c8c8" stroke-width="1.2"/>
<circle cx="20" cy="642" r="7" fill="#999"/><circle cx="25" cy="648" r="7.5" fill="#6a6a6a" stroke="#c8c8c8" stroke-width="1.3"/>
</svg>
<!-- LAYERS PANEL -->
<div class="a" style="left:1573px;top:284px;width:303px;height:278px;background:#494949;box-shadow:-1px 2px 4px rgba(0,0,0,0.35)"></div>
<div class="a" style="left:1573px;top:284px;width:303px;height:37px;background:#3c3c3c"></div>
<div class="a" style="left:1573px;top:284px;width:50px;height:37px;background:#494949"></div>
<div class="t" style="left:1585px;top:298px;font-size:14px;color:#e6e6e6;font-weight:bold">图层</div>
<svg class="a" style="left:1820px;top:296px" width="52" height="20"><path d="M5 5l4 4-4 4M10 5l4 4-4 4" fill="none" stroke="#ccc" stroke-width="1.2"/><rect x="25" y="3" width="1.3" height="14" fill="#999"/><path d="M35 5h13M35 9.5h13M35 14h13" stroke="#bbb" stroke-width="1.4"/></svg>
<div class="a" style="left:1581px;top:330px;width:286px;height:196px;border:1px solid #444"></div>
<div class="a" style="left:1581px;top:331px;width:286px;height:25px;background:#46596f"></div>
<svg class="a" style="left:1855px;top:330px" width="12" height="10"><path d="M2 1h9v9z" fill="#ddd"/></svg>
<div class="a" style="left:1581px;top:356px;width:286px;height:1px;background:#424242"></div>
<div class="a" style="left:1581px;top:382px;width:286px;height:1px;background:#424242"></div>
<div class="a" style="left:1581px;top:408px;width:286px;height:1px;background:#424242"></div>
<div class="a" style="left:1604px;top:331px;width:1px;height:77px;background:#424242"></div>
<div class="a" style="left:1821px;top:331px;width:1px;height:77px;background:#424242"></div>
<svg class="a" style="left:1581px;top:331px" width="286" height="80">
<g fill="none" stroke="#c8c8c8" stroke-width="1.4"><path d="M5 11c4-5 10-5 14 0c-4 5-10 5-14 0z"/><path d="M5 37c4-5 10-5 14 0c-4 5-10 5-14 0z"/><path d="M5 63c4-5 10-5 14 0c-4 5-10 5-14 0z"/></g>
<g fill="#c8c8c8"><circle cx="12" cy="11" r="2"/><circle cx="12" cy="37" r="2"/><circle cx="12" cy="63" r="2"/>
<rect x="34" y="37" width="10" height="7" rx="1"/><rect x="34" y="63" width="10" height="7" rx="1"/></g>
<g fill="none" stroke="#c8c8c8" stroke-width="1.5"><path d="M36 37v-2.5a3 3 0 0 1 6 0v2.5"/><path d="M36 63v-2.5a3 3 0 0 1 6 0v2.5"/>
<path d="M69 33l3.5 4-3.5 4M69 59l3.5 4-3.5 4"/></g>
<rect x="54" y="2" width="4" height="22" fill="#3fd33f"/><rect x="54" y="27" width="4" height="23" fill="#e33b3b"/><rect x="54" y="52" width="4" height="23" fill="#3b6be3"/>
<rect x="90.5" y="1.5" width="22" height="22" rx="2" fill="#fff" stroke="#222"/>
<rect x="90.5" y="27.5" width="22" height="22" rx="2" fill="#fdf3ef" stroke="#222"/>
<rect x="90.5" y="53.5" width="22" height="22" rx="2" fill="#fdf3ef" stroke="#222"/>
<rect x="95" y="34" width="10" height="1" fill="#e0b0a0"/><rect x="103" y="37" width="7" height="6" fill="#f8dcd4"/>
<circle cx="101" cy="64" r="5" fill="#d07070"/><circle cx="104" cy="66" r="3" fill="#e89a8a"/>
<g fill="none" stroke="#c8c8c8" stroke-width="1.3"><circle cx="254" cy="12" r="5"/><circle cx="254" cy="38" r="5"/><circle cx="254" cy="64" r="5"/></g>
</svg>
<div class="t" style="left:1701px;top:334px;font-size:16px;color:#f0f0f0">图层 3</div>
<div class="t" style="left:1701px;top:360px;font-size:16px;color:#e6e6e6">图层 2</div>
<div class="t" style="left:1701px;top:386px;font-size:16px;color:#e6e6e6">图层 1</div>
<div class="t" style="left:1580px;top:531px;font-size:16px;color:#e0e0e0">3 图层</div>
<svg class="a" style="left:1655px;top:528px" width="190" height="22">
<g fill="none" stroke="#5c5c5c" stroke-width="1.3"><path d="M7 6h-3v12h12v-3M10 12l8-8M13 4h5v5"/><circle cx="51" cy="9" r="5.5"/><path d="M47 13l-5 6"/><rect x="74" y="5" width="11" height="11"/></g>
<rect x="77" y="8" width="6" height="6" fill="#5c5c5c"/>
<g fill="#c4c4c4"><path d="M101 6h3v6h5v-3l4 4.5-4 4.5v-3h-8z"/><rect x="109" y="6" width="12" height="12"/><path d="M139 5h14v13h-9l-5-5z"/><rect x="173" y="7" width="11" height="12" rx="1"/><rect x="171" y="5" width="15" height="2"/><rect x="175" y="3" width="7" height="2"/></g>
<path d="M112 11h4v4" stroke="#494949" stroke-width="1"/>
</svg>
<div class="a" style="left:1573px;top:553px;width:303px;height:9px;background:#3e3e3e"></div>
<div class="a" style="left:1711px;top:554px;width:25px;height:6px;background:#353535"></div>
<!-- hand cursor -->
<svg class="a" style="left:1196px;top:536px;z-index:30" width="28" height="28"><path d="M4 12C2 13 2 15 4 17L9 23C11 25 15 25 17 23C19 21 20 18 21 15L24 10C25 8 23 6.5 21.5 8L19.5 11L20 6C20 4 17.5 4 17.5 6L16.5 10.5L15.5 4.5C15.5 2.5 13 2.5 13 4.5L13 10.5L11 6C10.5 4 8 4.5 8.5 6.5L10 13L9.5 15L6.5 12.5C5.5 11.5 4.5 11.5 4 12Z" fill="#e6e6e6" stroke="#2a2a2a" stroke-width="1.3" stroke-linejoin="round"/></svg>


<!-- WATERMARK -->
<svg class="a" style="left:1688px;top:18px;z-index:25" width="215" height="52" viewBox="0 0 215 52">
<g fill="none" stroke="rgba(150,150,150,0.85)" stroke-width="3.2" stroke-linecap="round" stroke-linejoin="round">
<path d="M2 10C8 9 10 14 10 22V40C10 46 14 48 20 48"/>
<path d="M20 18C20 12 24 10 30 10H58C64 10 68 14 68 20V38C68 44 64 48 58 48H30C24 48 20 44 20 38Z"/>
<path d="M27 10L29 3L35 10M53 10L59 3L61 10"/>
<path d="M32 17H56M36 23H52M44 13V23"/>
<path d="M14 30H20M14 36H20M68 30H74M68 36H74"/>
<path d="M76 50V26C76 18 80 16 86 16H112M92 8V16M95 12H110"/>
<path d="M82 26H112M86 34H110C110 40 108 44 104 44H100C96 44 96 48 104 48H114"/>
<path d="M90 34V48"/>
<path d="M120 12L126 18M118 28H126V46L132 42"/>
<path d="M136 10H160V30H136ZM136 20H160M148 10V48M134 36H162M148 36L136 48M148 36L160 48"/>
<path d="M170 48V8H204V44C204 48 200 50 194 50"/>
<path d="M176 18L186 38M186 18L176 38M190 18L200 38M200 18L190 38"/>
</g>
<path d="M38 28V42L50 35Z" fill="rgba(150,150,150,0.85)"/>
</svg>

<!-- ANNOTATIONS -->
<svg class="a" style="left:0;top:0;z-index:20" width="1460" height="600">
<g fill="#f5302f">
<path d="M27.5 223L50.5 217.5L48 226L110.5 245L45.5 231.5L45 237.5Z"/>
<path d="M28 393.6L43.8 378L47 381L107 365L50 386L51.4 395.8Z"/>
<path d="M27.8 470L50 475.5L45 480L104.4 532L39 486L38.9 491Z"/>
<path d="M1194.6 204.7L1214 193L1213 199L1288 195.5L1215 207L1216.5 212.7Z"/>
</g>
</svg>
<div class="t" style="left:123px;top:230px;font-size:34px;color:#f5302f;z-index:21">矩形</div>
<div class="t" style="left:132px;top:353px;font-size:34px;color:#f5302f;z-index:21">吸管</div>
<div class="t" style="left:113px;top:521px;font-size:34px;color:#f5302f;z-index:21">画板</div>
<div class="t" style="left:1303px;top:166px;font-size:34px;color:#f5302f;z-index:21">参考颜色</div>

</body></html>
